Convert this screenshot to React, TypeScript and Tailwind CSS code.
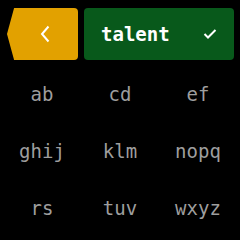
import React from 'react';

const groups = ['ab', 'cd', 'ef', 'ghij', 'klm', 'nopq', 'rs', 'tuv', 'wxyz'];

const App: React.FC = () => {
  return (
    <div className="w-[240px] h-[240px] bg-black overflow-hidden font-['DejaVu_Sans_Mono',monospace]">
      <div className="flex gap-[6px] pt-2 pl-[7px] pr-[6px]">
        <button className="w-[71px] h-[52px] bg-[#e2a100] rounded-r-[4px] flex items-center justify-center pl-[4px] [clip-path:polygon(10%_0,100%_0,100%_100%,10%_100%,0_50%)]">
          <svg width="14" height="20" viewBox="0 0 14 20" fill="none" stroke="white" strokeWidth="2">
            <path d="M10.5 2.5 L4 10 L10.5 17.5" />
          </svg>
        </button>
        <div className="flex-1 h-[52px] bg-[#08591b] rounded-[4px] flex items-center justify-between pl-[17px] pr-[17px]">
          <span className="text-white text-[19px] font-bold leading-none">talent</span>
          <svg width="14" height="12" viewBox="0 0 14 12" fill="none" stroke="white" strokeWidth="2">
            <path d="M1.5 6 L5 9.5 L12.5 2" />
          </svg>
        </div>
      </div>
      <div className="grid grid-cols-3 px-[3px] pt-[6px]">
        {groups.map(g => (
          <div key={g} className="h-[57px] flex items-center justify-center text-[19px] text-[#9e9e9e]">
            {g}
          </div>
        ))}
      </div>
    </div>
  );
};

export default App;
